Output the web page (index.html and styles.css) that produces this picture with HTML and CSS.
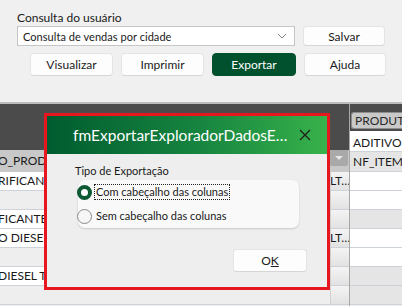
FILE: index.html
```html
<!DOCTYPE html>
<html lang="pt">
<head>
    <meta charset="UTF-8">
    <title>Exportar</title>
    <link rel="stylesheet" href="styles.css">
</head>
<body>
    <div class="toolbar">
        <div class="toolbar-label">Consulta do usuário</div>
        <div class="toolbar-row">
            <div class="combo">
                <span>Consulta de vendas por cidade</span>
                <svg class="chevron" width="10" height="6" viewBox="0 0 10 6"><path d="M1 1 L5 5 L9 1" fill="none" stroke="#8a8a8a" stroke-width="1"/></svg>
            </div>
            <button class="btn btn-salvar">Salvar</button>
        </div>
        <div class="toolbar-row row-actions">
            <button class="btn btn-wide">Visualizar</button>
            <button class="btn btn-wide">Imprimir</button>
            <button class="btn btn-wide btn-primary">Exportar</button>
            <button class="btn btn-salvar">Ajuda</button>
        </div>
    </div>

    <div class="grid-area">
        <div class="pane-left">
            <div class="dark-band band-left"></div>
            <div class="head-row">
                <div class="cell-a head-cell">O_PRODUTO</div>
                <div class="cell-b head-cell">
                    <div class="drop-btn"></div>
                </div>
            </div>
            <div class="row"><div class="cell-a white">RIFICANTES</div><div class="cell-b">LT…</div></div>
            <div class="row"><div class="cell-a soft"></div><div class="cell-b"></div></div>
            <div class="row"><div class="cell-a white">FICANTES</div><div class="cell-b"></div></div>
            <div class="row"><div class="cell-a white">O DIESEL</div><div class="cell-b">LT…</div></div>
            <div class="row"><div class="cell-a soft"></div><div class="cell-b"></div></div>
            <div class="row"><div class="cell-a white">DIESEL Total</div><div class="cell-b"></div></div>
            <div class="row"><div class="cell-a soft"></div><div class="cell-b"></div></div>
        </div>
        <div class="pane-right">
            <div class="dark-band band-right">
                <span class="badge">PRODUTO</span>
            </div>
            <div class="rrow white r-first">ADITIVO PARA</div>
            <div class="rrow grey r-second">NF_ITEM_QTD</div>
            <div class="rrow white"></div>
            <div class="rrow white"></div>
            <div class="rrow grey"></div>
            <div class="rrow white"></div>
            <div class="rrow white"></div>
            <div class="rrow grey"></div>
            <div class="rrow grey"></div>
        </div>
    </div>

    <div class="dialog">
        <div class="dialog-title">
            <span>fmExportarExploradorDadosE…</span>
            <svg class="close" width="12" height="12" viewBox="0 0 12 12"><path d="M1 1 L11 11 M11 1 L1 11" stroke="#1c1c1c" stroke-width="1.2"/></svg>
        </div>
        <div class="dialog-body">
            <div class="group-label">Tipo de Exportação</div>
            <div class="group-card">
                <label class="option">
                    <span class="radio checked"></span>
                    <span class="option-text focused">Com cabeçalho das colunas</span>
                </label>
                <label class="option">
                    <span class="radio"></span>
                    <span class="option-text">Sem cabeçalho das colunas</span>
                </label>
            </div>
            <div class="dialog-actions">
                <button class="btn btn-ok">O<u>K</u></button>
            </div>
        </div>
    </div>
</body>
</html>
```

FILE: styles.css
```css
* {
    margin: 0;
    padding: 0;
    box-sizing: border-box;
}

body {
    font-family: Lato, "Noto Sans", sans-serif;
    font-size: 12px;
    color: #1a1a1a;
    background: #f0f0f0;
    width: 402px;
    height: 306px;
    overflow: hidden;
    position: relative;
}

/* top toolbar */
.toolbar {
    height: 104px;
    padding: 10px 0 0 17px;
    border-bottom: 2px solid #bdbdbd;
    background: #f0f0f0;
}

.toolbar-label {
    height: 16px;
    line-height: 16px;
    font-size: 12px;
}

.toolbar-row {
    display: flex;
    gap: 8px;
}

.row-actions {
    margin-top: 7px;
    padding-left: 13px;
}

.combo {
    width: 278px;
    height: 20px;
    background: #fff;
    border: 1px solid #c6c6c6;
    display: flex;
    align-items: center;
    justify-content: space-between;
    padding: 0 7px 0 5px;
    font-size: 11px;
    letter-spacing: 0.05px;
}

.btn {
    font-family: inherit;
    font-size: 12px;
    color: #1a1a1a;
    background: #fdfdfd;
    border: 1px solid #e4e4e4;
    border-bottom-color: #d6d6d6;
    border-radius: 4px;
    cursor: pointer;
}

.btn-salvar {
    width: 82px;
    height: 20px;
}

.row-actions .btn {
    height: 23px;
}

.btn-wide {
    width: 83px;
}

.btn-primary {
    width: 84px;
    background: #01512f;
    border-color: #01512f;
    color: #fff;
}

/* background grid */
.grid-area {
    display: flex;
    height: 202px;
}

.pane-left {
    width: 350px;
    border-right: 1px solid #a8a8a8;
}

.pane-right {
    flex: 1;
    overflow: hidden;
}

.dark-band {
    background: #4b4b4b;
}

.band-left {
    height: 46px;
}

.band-right {
    height: 27px;
    padding: 8px 0 0 1px;
}

.badge {
    display: block;
    height: 17px;
    line-height: 15px;
    padding-left: 3px;
    background: #c9c9c9;
    border: 1px solid #8e8e8e;
    border-right: none;
    border-radius: 3px 0 0 3px;
    white-space: nowrap;
    font-size: 12px;
    color: #2a2a2a;
}

.head-row,
.row {
    display: flex;
}

.head-row {
    height: 22px;
}

.row {
    height: 19px;
    border-bottom: 1px solid #cdd1d8;
}

.cell-a {
    width: 330px;
    line-height: 18px;
    white-space: nowrap;
    overflow: hidden;
    font-size: 12px;
    text-indent: -2px;
}

.cell-b {
    width: 19px;
    background: linear-gradient(#f4f4f4, #e2e2e2);
    border-left: 1px solid #cfcfcf;
    font-size: 12px;
    line-height: 18px;
    text-indent: -1px;
    overflow: hidden;
    white-space: nowrap;
}

.head-cell {
    background: #c8c8c8;
    line-height: 22px;
    border-left: none;
}

.drop-btn {
    width: 18px;
    height: 17px;
    margin-top: -1px;
    background: #a9a9a9;
    border-radius: 2px;
    position: relative;
}

.drop-btn::after {
    content: "";
    position: absolute;
    left: 5px;
    top: 7px;
    border-left: 4px solid transparent;
    border-right: 4px solid transparent;
    border-top: 4px solid #e6e6e6;
}

.white {
    background: #fff;
}

.soft {
    background: #eeeeee;
}

.grey {
    background: #e5e5e5;
}

.rrow {
    height: 19px;
    border-bottom: 1px solid #cdd1d8;
    padding-left: 3px;
    line-height: 18px;
    white-space: nowrap;
    font-size: 12px;
}

.r-first {
    height: 21px;
    line-height: 24px;
}

.r-second {
    height: 20px;
    line-height: 20px;
}

/* dialog window */
.dialog {
    position: absolute;
    left: 44px;
    top: 113px;
    width: 286px;
    height: 177px;
    border: 3px solid #e8161e;
    background: #eeeeee;
    display: flex;
    flex-direction: column;
}

.dialog-title {
    height: 38px;
    flex-shrink: 0;
    background: linear-gradient(90deg, #005c2f 0%, #178540 55%, #38b24b 100%);
    color: #fff;
    font-size: 15.5px;
    display: flex;
    align-items: center;
    justify-content: space-between;
    padding: 0 16px 0 26px;
}

.dialog-body {
    flex: 1;
    padding: 9px 0 0 28px;
    font-size: 11px;
}

.group-label {
    line-height: 16px;
    height: 16px;
}

.group-card {
    margin: 1px 0 0 3px;
    width: 221px;
    height: 48px;
    background: #f9f9f9;
    border-radius: 7px;
    box-shadow: 0 1px 2px rgba(0, 0, 0, 0.16);
    display: flex;
    flex-direction: column;
    justify-content: space-around;
}

.option {
    display: flex;
    align-items: center;
    gap: 2px;
    margin-left: -1px;
}

.radio {
    width: 15px;
    height: 15px;
    border-radius: 50%;
    border: 1px solid #8a8a8a;
    background: #f6f6f6;
}

.radio.checked {
    border: 4px solid #0b5a34;
    background: #fff;
}

.option-text {
    padding: 0 1px;
    line-height: 14px;
    border: 1px dotted transparent;
}

.option-text.focused {
    border-color: #222;
}

.dialog-actions {
    display: flex;
    justify-content: flex-end;
    padding: 21px 20px 0 0;
}

.btn-ok {
    width: 74px;
    height: 23px;
    font-size: 12px;
}
```
